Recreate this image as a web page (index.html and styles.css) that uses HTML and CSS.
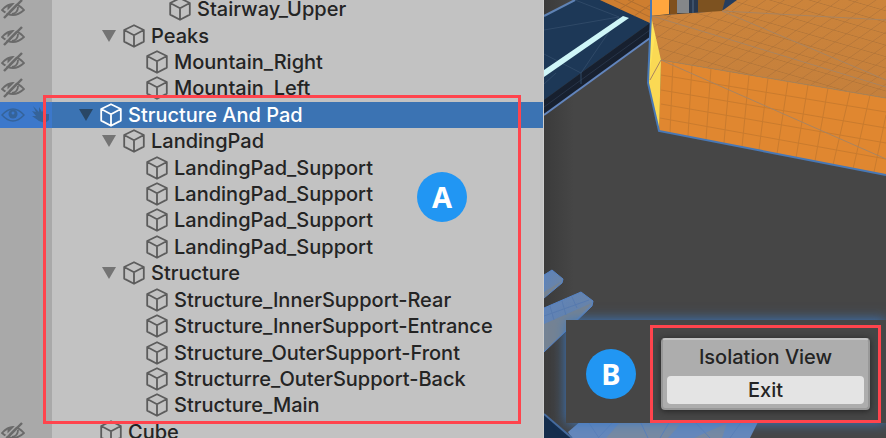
FILE: index.html
```html
<!DOCTYPE html>
<html lang="en">
<head>
  <meta charset="UTF-8" />
  <meta name="viewport" content="width=device-width, initial-scale=1.0"/>
  <title>Isolation View</title>
  <link rel="stylesheet" href="styles.css">
</head>
<body>

  <svg class="symbols" aria-hidden="true">
    <symbol id="cube" viewBox="0 0 22 24">
      <path d="M11 1.2 20.8 6v11.6L11 22.8 1.2 17.6V6zM1.2 6 11 11.2 20.8 6M11 11.2v11.6" fill="none" stroke="currentColor" stroke-width="1.8" stroke-linejoin="round"/>
    </symbol>
    <symbol id="arrow" viewBox="0 0 14 12">
      <path d="M0 0h14L7 12z" fill="currentColor"/>
    </symbol>
    <symbol id="hidden" viewBox="0 0 24 20">
      <path d="M1 11Q12-1 23 11Q12 21 1 11z" fill="none" stroke="currentColor" stroke-width="1.8"/>
      <path d="M7 6Q12 4 16 6L9 14Q5 11 7 6z" fill="currentColor"/>
      <path d="M17 8Q17 14 11 15" fill="none" stroke="currentColor" stroke-width="1.8"/>
      <path d="M1.5 17.5 19.5-.5" stroke="#a9a9a9" stroke-width="1.5"/>
      <path d="M3 19 21 1" stroke="currentColor" stroke-width="2.4"/>
    </symbol>
    <symbol id="eye" viewBox="0 0 24 20">
      <path d="M1 10Q12-2 23 10Q12 22 1 10z" fill="none" stroke="currentColor" stroke-width="1.4"/>
      <circle cx="12" cy="9" r="4.5" fill="currentColor"/>
      <circle cx="12" cy="8" r="1.5" fill="#3c78cb"/>
    </symbol>
    <symbol id="pick" viewBox="0 0 20 20">
      <path d="M2 1 8 7 8 2 11 7 13 4 15 9 18 9 18 15 14 18 8 16 1 11 5 11 1 6 5 7z" fill="currentColor"/>
    </symbol>
  </svg>

  <main class="editor">
    <section class="hierarchy">
      <ul class="tree">
        <li class="row level-3">
          <div class="gutter"><button aria-label="Show"><svg class="eye"><use href="#hidden"/></svg></button></div>
          <span class="fold"></span><svg class="cube"><use href="#cube"/></svg><span>Stairway_Upper</span>
        </li>
        <li class="row level-1">
          <div class="gutter"><button aria-label="Show"><svg class="eye"><use href="#hidden"/></svg></button></div>
          <button class="fold" aria-label="Collapse"><svg class="arrow"><use href="#arrow"/></svg></button><svg class="cube"><use href="#cube"/></svg><span>Peaks</span>
        </li>
        <li class="row level-2">
          <div class="gutter"><button aria-label="Show"><svg class="eye"><use href="#hidden"/></svg></button></div>
          <span class="fold"></span><svg class="cube"><use href="#cube"/></svg><span>Mountain_Right</span>
        </li>
        <li class="row level-2">
          <div class="gutter"><button aria-label="Show"><svg class="eye"><use href="#hidden"/></svg></button></div>
          <span class="fold"></span><svg class="cube"><use href="#cube"/></svg><span>Mountain_Left</span>
        </li>
        <li class="row selected">
          <div class="gutter">
            <button aria-label="Hide"><svg class="eye"><use href="#eye"/></svg></button>
            <button aria-label="Pick"><svg class="pick"><use href="#pick"/></svg></button>
          </div>
          <button class="fold" aria-label="Collapse"><svg class="arrow"><use href="#arrow"/></svg></button><svg class="cube"><use href="#cube"/></svg><span>Structure And Pad</span>
        </li>
        <li class="row level-1">
          <div class="gutter"></div>
          <button class="fold" aria-label="Collapse"><svg class="arrow"><use href="#arrow"/></svg></button><svg class="cube"><use href="#cube"/></svg><span>LandingPad</span>
        </li>
        <li class="row level-2">
          <div class="gutter"></div>
          <span class="fold"></span><svg class="cube"><use href="#cube"/></svg><span>LandingPad_Support</span>
        </li>
        <li class="row level-2">
          <div class="gutter"></div>
          <span class="fold"></span><svg class="cube"><use href="#cube"/></svg><span>LandingPad_Support</span>
        </li>
        <li class="row level-2">
          <div class="gutter"></div>
          <span class="fold"></span><svg class="cube"><use href="#cube"/></svg><span>LandingPad_Support</span>
        </li>
        <li class="row level-2">
          <div class="gutter"></div>
          <span class="fold"></span><svg class="cube"><use href="#cube"/></svg><span>LandingPad_Support</span>
        </li>
        <li class="row level-1">
          <div class="gutter"></div>
          <button class="fold" aria-label="Collapse"><svg class="arrow"><use href="#arrow"/></svg></button><svg class="cube"><use href="#cube"/></svg><span>Structure</span>
        </li>
        <li class="row level-2">
          <div class="gutter"></div>
          <span class="fold"></span><svg class="cube"><use href="#cube"/></svg><span>Structure_InnerSupport-Rear</span>
        </li>
        <li class="row level-2">
          <div class="gutter"></div>
          <span class="fold"></span><svg class="cube"><use href="#cube"/></svg><span>Structure_InnerSupport-Entrance</span>
        </li>
        <li class="row level-2">
          <div class="gutter"></div>
          <span class="fold"></span><svg class="cube"><use href="#cube"/></svg><span>Structure_OuterSupport-Front</span>
        </li>
        <li class="row level-2">
          <div class="gutter"></div>
          <span class="fold"></span><svg class="cube"><use href="#cube"/></svg><span>Structurre_OuterSupport-Back</span>
        </li>
        <li class="row level-2">
          <div class="gutter"></div>
          <span class="fold"></span><svg class="cube"><use href="#cube"/></svg><span>Structure_Main</span>
        </li>
        <li class="row">
          <div class="gutter"><button aria-label="Show"><svg class="eye"><use href="#hidden"/></svg></button></div>
          <span class="fold"></span><svg class="cube"><use href="#cube"/></svg><span>Cube</span>
        </li>
      </ul>
      <div class="callout-tree"></div>
      <div class="badge badge-tree">A</div>
    </section>

    <section class="scene">
      <svg class="viewport" viewBox="0 0 342 438" preserveAspectRatio="xMinYMin slice" aria-hidden="true">
        <defs>
          <pattern id="topGrid" width="14" height="14" patternUnits="userSpaceOnUse" patternTransform="matrix(.93 .27 -.82 .58 118 60)">
            <path d="M0 0H14M0 0V14" fill="none" stroke="#ad7238" stroke-width="1.3"/>
          </pattern>
          <linearGradient id="topFace" x1="0" y1="0" x2="0" y2="1">
            <stop offset="0" stop-color="#cc843b"/>
            <stop offset="1" stop-color="#c5803c"/>
          </linearGradient>
          <linearGradient id="crystal" x1="0" y1="0" x2="1" y2="1">
            <stop offset="0" stop-color="#5c83bd"/>
            <stop offset="1" stop-color="#71859c"/>
          </linearGradient>
        </defs>

        <!-- landing pad -->
        <path d="M0 16 31 0H56L106 23 37 73 0 100z" fill="#1d3857"/>
        <path d="M106 23V38L0 115V100L37 73z" fill="#17202f"/>
        <path d="M0 107 37 80 106 30" fill="none" stroke="#273448"/>
        <path d="M0 30 75 17 37 73 0 54M37 73V84M31 0 75 17M0 84 12 73" fill="none" stroke="#2f4967"/>
        <path d="M0 16 31 0" stroke="#5f83b5" stroke-width="2"/>
        <path d="M0 115 106 38" stroke="#6285bd" stroke-width="2"/>
        <path d="M0 70 79 16 85 18 0 77z" fill="#cff6f8"/>

        <!-- structure -->
        <path d="M56 0H106V23z" fill="#ce7e30"/>
        <path d="M70 0 106 17M84 0 106 10M76 9 90 0M90 16 106 5" stroke="#b06f30"/>
        <path d="M107 0H125V14L106 16z" fill="#ffa63e"/>
        <path d="M125 0H133V14H126z" fill="#80501c"/>
        <path d="M133 0H145V13H133z" fill="#858789"/>
        <path d="M145 0H154V13H145z" fill="#28384e"/>
        <path d="M149 0V13" stroke="#536a86"/>
        <path d="M154 0H181V12H154z" fill="#7d5220"/>
        <path d="M181 0H193L178 12z" fill="#263d5e"/>
        <path d="M106 16 178 11 193 0H342V98L117 60z" fill="url(#topFace)"/>
        <path d="M106 16 178 11 193 0H342V98L117 60z" fill="url(#topGrid)"/>
        <path d="M117 60 342 98V175L115 131z" fill="#e08730"/>
        <path d="M107 16 117 60 115 131 104 83 106 38z" fill="#ffe45a"/>
        <path d="M111 36 117 60 115 131 104 83" fill="#f4cc4d" opacity=".45"/>
        <path d="M117 75 342 112M117 90 342 128M117 104 342 143M116 118 342 159" stroke="#c97b2e"/>
        <path d="M129 62 126 133M148 65 144 136M167 68 162 140M186 72 180 143M205 75 198 147M224 78 215 150M244 81 233 154M264 85 252 158M284 88 271 161M306 92 289 165M326 95 309 169M342 115 330 172" stroke="#c97b2e"/>
        <path d="M117 60 342 98" stroke="#a98358"/>
        <path d="M108 16 342 87M178 11 342 80M178 11 342 20M117 60 342 159M117 60 106 80" fill="none" stroke="#a98460"/>
        <path d="M107 0V16L106 38 104 83 115 131 342 175" fill="none" stroke="#4878b5" stroke-width="2"/>

        <!-- hidden rocks -->
        <path d="M0 275 8 270 19 279 18 283 0 298z" fill="url(#crystal)" stroke="#5684c6"/>
        <path d="M0 308 37 292 49 301 48 306 0 352z" fill="url(#crystal)" stroke="#5684c6"/>
        <path d="M0 292 18 281 0 298zM0 324 48 303 22 330 0 351z" fill="#7c8388" opacity=".7"/>
        <path d="M6 306 10 320M18 301 22 315M28 297 33 308M0 316 45 300" stroke="#587baf"/>
        <path d="M24 432 38 420H215L206 438H28z" fill="#6688bb"/>
        <path d="M62 438 78 420H140L124 438zM150 438 183 423 178 438z" fill="#788aa2"/>
        <path d="M45 423 55 438M70 421 54 438M96 421 104 438M126 421 116 438M150 421 166 438M198 421 186 438" stroke="#5c80b8"/>
        <path d="M0 414 28 438H0z" fill="#142d4c"/>
        <path d="M0 414 28 438" stroke="#466b9d" stroke-width="2"/>
      </svg>

      <div class="inset">
        <div class="badge">B</div>
        <div class="callout">
          <div class="isolation">
            <div class="isolation-title">Isolation View</div>
            <button class="exit">Exit</button>
          </div>
        </div>
      </div>
    </section>
  </main>

</body>
</html>
```

FILE: styles.css
```css
* {
  box-sizing: border-box;
}

body {
  margin: 0;
  font-family: Inter, "Liberation Sans", sans-serif;
  font-size: 20px;
  font-weight: 500;
  color: #242424;
}

button {
  display: flex;
  padding: 0;
  border: none;
  background: none;
  color: inherit;
  font: inherit;
  cursor: pointer;
}

.symbols {
  display: none;
}

.editor {
  display: grid;
  grid-template-columns: 544px 1fr;
  min-height: 100vh;
}

/* hierarchy */
.hierarchy {
  position: relative;
  display: grid;
  overflow: hidden;
  background: #c2c2c2;
}

.tree {
  display: grid;
  grid-auto-rows: minmax(26px, 1fr);
  margin: -4px 0 -7px;
  padding: 0;
  list-style: none;
  border-right: 1px solid #cdcdcd;
}

.row {
  display: flex;
  align-items: center;
  line-height: 24px;
  white-space: nowrap;
}

.gutter {
  align-self: stretch;
  display: flex;
  align-items: center;
  gap: 6px;
  width: 52px;
  margin-right: 27px;
  padding-left: 1px;
  background: #a9a9a9;
  color: #6a6a6a;
}

.level-1 .gutter + .fold {
  margin-left: 23px;
}

.level-2 .gutter + .fold {
  margin-left: 46px;
}

.level-3 .gutter + .fold {
  margin-left: 69px;
}

.fold {
  width: 14px;
  margin-right: 7px;
  color: #747474;
}

.arrow {
  width: 14px;
  height: 12px;
}

.cube {
  width: 22px;
  height: 24px;
  margin-right: 6px;
  color: #5c5c5c;
}

.eye {
  width: 24px;
  height: 20px;
}

.pick {
  width: 20px;
  height: 20px;
}

.selected {
  background: #3b73b3;
  color: #fff;
}

.selected .gutter {
  background: #3c78cb;
  color: #356399;
}

.selected .fold {
  color: #294766;
}

.selected .cube {
  color: #fff;
}

/* callouts */
.callout-tree {
  position: absolute;
  top: 95px;
  right: 23px;
  bottom: 14px;
  left: 43px;
  border: 3px solid #ff444d;
}

.badge {
  display: grid;
  place-items: center;
  width: 50px;
  height: 50px;
  border-radius: 50%;
  background: #2196f3;
  color: #fff;
  font-family: "Noto Sans", sans-serif;
  font-size: 29px;
  font-weight: bold;
  line-height: 30px;
}

.badge-tree {
  position: absolute;
  top: 172px;
  right: 77px;
}

/* scene */
.scene {
  position: relative;
  overflow: hidden;
  background: linear-gradient(to right, #3b3b3b, #464646 30px);
}

.viewport {
  display: block;
  width: 100%;
  height: 100%;
}

.inset {
  position: absolute;
  right: 0;
  bottom: 15px;
  left: 22px;
  display: flex;
  align-items: center;
  justify-content: space-between;
  padding: 5px 5px 0 20px;
  background: #464646;
  box-shadow: 0 0 12px #3a78c4;
}

.callout {
  flex: 1;
  margin-left: 14px;
  padding: 10px 8px;
  border: 3px solid #ff444d;
}

.isolation {
  padding: 4px;
  border: 2px solid #989898;
  border-top-color: #c4c4c4;
  border-radius: 4px;
  background: #adadad;
  box-shadow: 0 1px 6px #222;
  text-align: center;
}

.isolation-title {
  padding-bottom: 6px;
  line-height: 26px;
}

.exit {
  display: block;
  width: 100%;
  border-radius: 4px;
  background: #e4e4e4;
  line-height: 28px;
}
```
